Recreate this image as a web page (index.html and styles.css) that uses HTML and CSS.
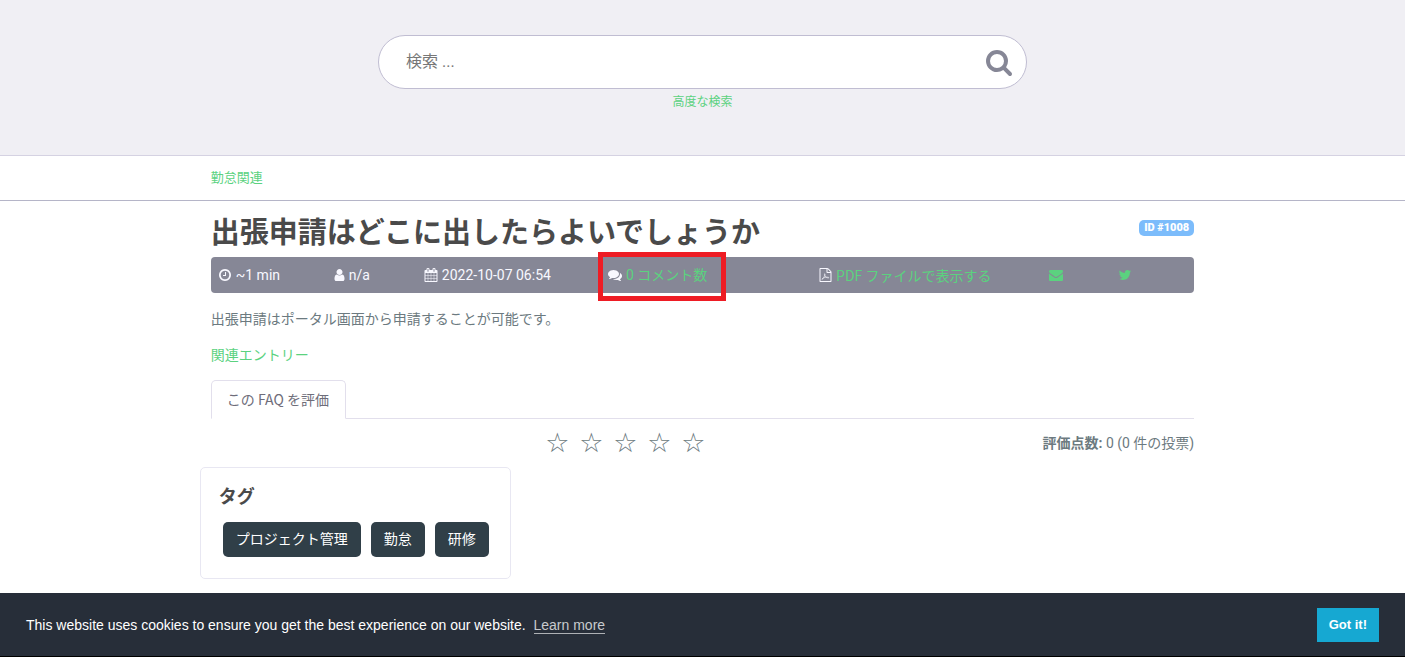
FILE: index.html
```
<!DOCTYPE html>
<html lang="ja">
<head>
<meta charset="utf-8">
<meta name="viewport" content="width=device-width, initial-scale=1">
<title>出張申請はどこに出したらよいでしょうか</title>
<link rel="stylesheet" href="styles.css">
</head>
<body>
<header class="search-header">
  <form class="search-form" role="search">
    <div class="search-box">
      <input class="search-input" type="text" placeholder="検索 ..." aria-label="検索">
      <button class="search-button" type="submit" aria-label="検索する">
        <svg class="search-icon" viewBox="0 0 1792 1792" aria-hidden="true"><path d="M1216 832q0-185-131.5-316.5t-316.5-131.5-316.5 131.5-131.5 316.5 131.5 316.5 316.5 131.5 316.5-131.5 131.5-316.5zm512 832q0 52-38 90t-90 38q-54 0-90-38l-343-342q-179 124-399 124-143 0-273.5-55.5t-225-150-150-225-55.5-273.5 55.5-273.5 150-225 225-150 273.5-55.5 273.5 55.5 225 150 150 225 55.5 273.5q0 220-124 399l343 343q37 37 37 90z"/></svg>
      </button>
    </div>
    <a class="advanced-link" href="#">高度な検索</a>
  </form>
</header>
<nav class="breadcrumb" aria-label="カテゴリー">
  <div class="container"><a href="#">勤怠関連</a></div>
</nav>
<main class="container">
  <div class="title-row">
    <h1 class="title">出張申請はどこに出したらよいでしょうか</h1>
    <span class="id-badge">ID #1008</span>
  </div>
  <ul class="meta">
    <li><svg class="icon" viewBox="0 0 1792 1792" aria-hidden="true"><path d="M1024 544v448q0 14-9 23t-23 9h-320q-14 0-23-9t-9-23v-64q0-14 9-23t23-9h224v-352q0-14 9-23t23-9h64q14 0 23 9t9 23zm416 352q0-148-73-273t-198-198-273-73-273 73-198 198-73 273 73 273 198 198 273 73 273-73 198-198 73-273zm224 0q0 209-103 385.5t-279.5 279.5-385.5 103-385.5-103-279.5-279.5-103-385.5 103-385.5 279.5-279.5 385.5-103 385.5 103 279.5 279.5 103 385.5z"/></svg><span>~1 min</span></li>
    <li><svg class="icon icon-user" viewBox="256 0 1280 1792" aria-hidden="true"><path d="M1536 1399q0 109-62.5 187t-150.5 78h-854q-88 0-150.5-78t-62.5-187q0-85 8.5-160.5t31.5-152 58.5-131 94-89 134.5-34.5q131 128 313 128t313-128q76 0 134.5 34.5t94 89 58.5 131 31.5 152 8.5 160.5zm-256-887q0 159-112.5 271.5t-271.5 112.5-271.5-112.5-112.5-271.5 112.5-271.5 271.5-112.5 271.5 112.5 112.5 271.5z"/></svg><span>n/a</span></li>
    <li><svg class="icon" viewBox="0 0 1792 1792" aria-hidden="true"><path d="M192 1664h288v-288h-288v288zm352 0h320v-288h-320v288zm-352-352h288v-320h-288v320zm352 0h320v-320h-320v320zm-352-384h288v-288h-288v288zm736 736h320v-288h-320v288zm-384-736h320v-288h-320v288zm768 736h288v-288h-288v288zm-384-352h320v-320h-320v320zm-352-864v-288q0-13-9.5-22.5t-22.5-9.5h-64q-13 0-22.5 9.5t-9.5 22.5v288q0 13 9.5 22.5t22.5 9.5h64q13 0 22.5-9.5t9.5-22.5zm736 864h288v-320h-288v320zm-384-384h320v-288h-320v288zm384 0h288v-288h-288v288zm32-480v-288q0-13-9.5-22.5t-22.5-9.5h-64q-13 0-22.5 9.5t-9.5 22.5v288q0 13 9.5 22.5t22.5 9.5h64q13 0 22.5-9.5t9.5-22.5zm384-64v1280q0 52-38 90t-90 38h-1408q-52 0-90-38t-38-90v-1280q0-52 38-90t90-38h128v-96q0-66 47-113t113-47h64q66 0 113 47t47 113v96h384v-96q0-66 47-113t113-47h64q66 0 113 47t47 113v96h128q52 0 90 38t38 90z"/></svg><span>2022-10-07 06:54</span></li>
    <li class="meta-comments"><svg class="icon" viewBox="0 0 1792 1792" aria-hidden="true"><path d="M1408 768q0 139-94 257t-256.500 186.500-353.500 68.500q-86 0-176-16-124 88-278 128-36 9-86 16h-3q-11 0-20.500-8t-11.500-21q-1-3-1-6.500t.5-6.500 2-6l2.500-5 3.500-5.500 4-5 4.500-5 4-4.500q5-6 23-25t26-29.500 22.500-29 25-38.500 20.500-44q-124-72-195-177t-71-224q0-139 94-257t256.500-186.500 353.500-68.500 353.500 68.500 256.500 186.500 94 257zm384 256q0 120-71 224.500t-195 176.500q10 24 20.500 44t25 38.500 22.500 29 26 29.500 23 25q1 1 4 4.500t4.500 5 4 5 3.500 5.500l2.500 5 2 6 .5 6.500-1 6.500q-3 14-13 22t-22 7q-50-7-86-16-154-40-278-128-90 16-176 16-271 0-472-132 58 4 88 4 161 0 309-45t264-129q125-92 192-212t67-254q0-77-23-152 129 71 204 178t75 230z"/></svg><a href="#">0 コメント数</a><span class="highlight"></span></li>
    <li><svg class="icon icon-file" viewBox="128 0 1536 1792" aria-hidden="true"><path d="M1596 380q28 28 48 76t20 88v1152q0 40-28 68t-68 28h-1344q-40 0-68-28t-28-68v-1600q0-40 28-68t68-28h896q40 0 88 20t76 48zm-444-244v376h376q-10-29-22-41l-313-313q-12-12-41-22zm384 1528v-1024h-416q-40 0-68-28t-28-68v-416h-768v1536h1280z"/><path class="pdf-mark" d="M450 1475C560 1430 800 1040 835 850C865 690 735 680 760 840C800 1060 1040 1290 1290 1265C1400 1250 1300 1160 1050 1180C820 1200 600 1260 480 1370C430 1410 420 1460 450 1475Z"/></svg><a class="cjk-first" href="#">PDF ファイルで表示する</a></li>
    <li><a class="icon-link" href="#" aria-label="メールで送信"><svg class="icon" viewBox="0 0 1792 1792" aria-hidden="true"><path d="M1792 710v794q0 66-47 113t-113 47h-1472q-66 0-113-47t-47-113v-794q44 49 101 87 362 246 497 345 57 42 92.500 65.500t94.500 48 110 24.500h2q51 0 110-24.500t94.500-48 92.500-65.500q170-123 498-345 57-39 100-87zm0-294q0 79-49 151t-122 123q-376 261-468 325-10 7-42.500 30.500t-54 38-52 32.500-57.500 27-50 9h-2q-23 0-50-9t-57.500-27-52-32.500-54-38-42.500-30.500q-91-64-262-182.500t-205-142.500q-62-42-117-115.500t-55-136.500q0-78 41.500-130t118.500-52h1472q65 0 112.500 47t47.500 113z"/></svg></a></li>
    <li><a class="icon-link" href="#" aria-label="Twitter"><svg class="icon" viewBox="0 0 1792 1792" aria-hidden="true"><path d="M1684 408q-67 98-162 167 1 14 1 42 0 130-38 259.500t-115.500 248.500-184.500 210.500-258 146-323 54.500q-271 0-496-145 35 4 78 4 225 0 401-138-105-2-188-64.500t-114-159.500q33 5 61 5 43 0 85-11-112-23-185.500-111.500t-73.500-205.500v-4q68 38 146 41-66-44-105-115t-39-154q0-88 44-163 121 149 294.500 238.500t371.500 99.500q-8-38-8-74 0-134 94.500-228.500t228.500-94.500q140 0 236 102 109-21 205-78-37 115-142 178 93-10 186-50z"/></svg></a></li>
  </ul>
  <p class="answer">出張申請はポータル画面から申請することが可能です。</p>
  <p class="related"><a href="#">関連エントリー</a></p>
  <div class="tabs"><a class="tab" href="#rating">この FAQ を評価</a></div>
  <div class="rating" id="rating">
    <div class="stars">
      <button type="button" aria-label="1">☆</button>
      <button type="button" aria-label="2">☆</button>
      <button type="button" aria-label="3">☆</button>
      <button type="button" aria-label="4">☆</button>
      <button type="button" aria-label="5">☆</button>
    </div>
    <div class="votes"><strong>評価点数:</strong> 0 (0 件の投票)</div>
  </div>
  <section class="tag-card">
    <h2 class="tag-title">タグ</h2>
    <div class="tags"><a href="#">プロジェクト管理</a><a href="#">勤怠</a><a href="#">研修</a></div>
  </section>
</main>
<div class="cookie-bar" role="dialog" aria-label="cookieconsent">
  <p class="cookie-text">This website uses cookies to ensure you get the best experience on our website. <a href="#">Learn more</a></p>
  <button class="cookie-button" type="button">Got it!</button>
</div>
</body>
</html>
```
FILE: styles.css
```
* { box-sizing: border-box; }

body {
  margin: 0;
  background: #fff;
  color: #6c7a80;
  font: 14px/20px Roboto, "Noto Sans CJK JP", sans-serif;
}

a { color: #5bd27f; text-decoration: none; }

.container { width: 70%; margin: 0 auto; }

.search-header {
  padding: 35px 0 43px;
  background: #f0eff4;
  border-bottom: 1px solid #d5d2e2;
}

.search-form {
  display: flex;
  flex-direction: column;
  align-items: center;
  gap: 3px;
}

.search-box {
  display: flex;
  align-items: center;
  width: 66%;
  max-width: 649px;
  height: 54px;
  padding: 0 13px 0 27px;
  border: 1px solid #c0bdd2;
  border-radius: 27px;
  background: #fff;
}

.search-input {
  flex: 1;
  min-width: 0;
  padding: 0;
  border: 0;
  outline: 0;
  background: none;
  font: 16px/24px Roboto, "Noto Sans CJK JP", sans-serif;
}

.search-input::placeholder { color: #777; opacity: 1; }

.search-button {
  display: flex;
  padding: 0;
  border: 0;
  background: none;
}

.search-icon { width: 28px; height: 28px; fill: #868796; }

.advanced-link { font-size: 12px; }

.breadcrumb {
  padding: 12px 0;
  border-bottom: 1px solid #b5b5c8;
  font-size: 13px;
}

.title-row {
  display: flex;
  justify-content: space-between;
  align-items: flex-start;
  padding-top: 14px;
}

.title {
  margin: 0;
  color: #4a4a4a;
  font-size: 29px;
  line-height: 36px;
}

.id-badge {
  margin-top: 5px;
  padding: 0 5px;
  border-radius: 5px;
  background: #7cbcfb;
  color: #fff;
  font-size: 11px;
  font-weight: 900;
  line-height: 16px;
}

.meta {
  display: grid;
  grid-template-columns: 116fr 90fr 184fr 211fr 230fr 69fr 76fr;
  align-items: center;
  height: 36px;
  margin: 6px 0 16px;
  padding: 0 0 0 7px;
  border-radius: 4px;
  background: #868796;
  color: #f8f8ff;
  list-style: none;
}

.meta li { display: flex; align-items: center; gap: 4px; white-space: nowrap; }

.icon { width: 14px; height: 14px; fill: currentColor; }
.icon-user { width: 11px; }
.icon-file { width: 13px; }
.icon-link { display: flex; }

.pdf-mark { fill: none; stroke: currentColor; stroke-width: 80; }

.cjk-first { font-family: "Noto Sans CJK JP", sans-serif; }

.meta-comments { position: relative; }

.highlight {
  position: absolute;
  top: -13px;
  left: -10px;
  width: 128px;
  height: 49px;
  border: 5px solid #ee1c24;
  pointer-events: none;
}

.answer { margin: 0 0 16px; }
.related { margin: 0 0 15px; }

.tabs { display: flex; border-bottom: 1px solid #e2dfec; }

.tab {
  margin-bottom: -1px;
  padding: 8px 16px 9px 15px;
  border: 1px solid #e2dfec;
  border-bottom-color: #fff;
  border-radius: 5px 5px 0 0;
  background: #fff;
  color: #6e6d7a;
  font-family: "Noto Sans CJK JP", sans-serif;
}

.rating {
  display: flex;
  justify-content: space-between;
  align-items: center;
  height: 48px;
  padding-left: 34%;
}

.stars { display: flex; gap: 10px; }

.stars button {
  width: 24px;
  padding: 0;
  border: 0;
  background: none;
  color: #6c7a80;
  font: 27px/32px "DejaVu Sans", sans-serif;
}

.tag-card {
  width: 311px;
  margin-left: -11px;
  padding: 18px 18px 21px;
  border: 1px solid #e8e7f2;
  border-radius: 5px;
}

.tag-title {
  margin: 0 0 14px;
  color: #4a4a4a;
  font-size: 18px;
  line-height: 22px;
}

.tags { display: flex; gap: 10px; padding-left: 4px; }

.tags a {
  padding: 7px 13px 8px;
  border-radius: 5px;
  background: #303f48;
  color: #fff;
}

.cookie-bar {
  position: fixed;
  right: 0;
  bottom: 0;
  left: 0;
  display: flex;
  justify-content: space-between;
  align-items: center;
  padding: 15px 26px 14px;
  border-bottom: 1px solid #000;
  background: #272e39;
  color: #fff;
  font-family: "Liberation Sans", sans-serif;
}

.cookie-text { margin: 0; font-size: 14px; }

.cookie-text a {
  margin-left: 4px;
  border-bottom: 1px solid #aeb1b5;
  color: #c8cacd;
}

.cookie-button {
  padding: 7px 12px;
  border: 0;
  background: #16a8d2;
  color: #fff;
  font: bold 13px/20px "Liberation Sans", sans-serif;
}
```
